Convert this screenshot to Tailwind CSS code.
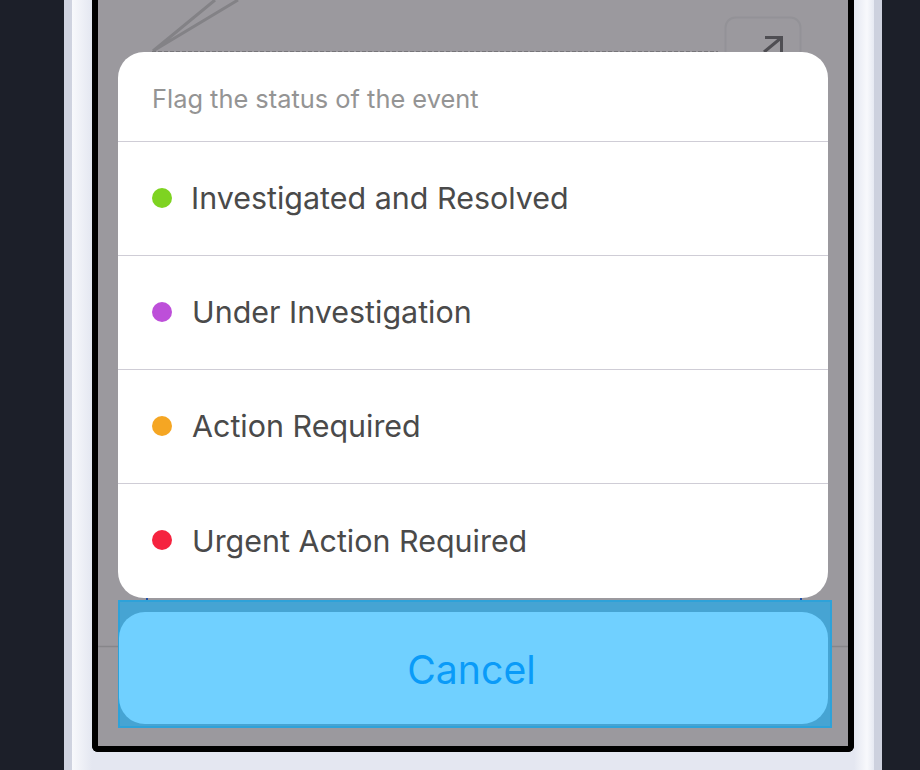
<!DOCTYPE html>
<html lang="en">
<head>
    <meta charset="UTF-8">
    <title>Flag status</title>
    <script src="https://cdn.jsdelivr.net/npm/@tailwindcss/browser@4"></script>
</head>
<body class="bg-[#1c1f29] font-['Inter',sans-serif]">
    <div class="w-[920px] h-[770px] overflow-hidden">
        <!-- phone body -->
        <div class="ml-[64px] w-[818px] h-[770px] border-l-8 border-r-8 border-l-[#cfd3e0] border-r-[#cdd1de] bg-[linear-gradient(to_right,#f8f9fc_0px,#e4e7f1_20px,#e4e7f1_782px,#f8f9fc_795px,#e6e9f2_802px)] pl-[20px]">
            <div class="w-[762px] h-[752px] border-x-6 border-b-6 border-black rounded-b-[6px] bg-[#9b999e] relative overflow-hidden">
                <!-- page behind the sheet -->
                <svg class="absolute left-0 top-0" width="750" height="746" viewBox="0 0 750 746" fill="none">
                    <path d="M55 51L117 0M55 51L140 0" stroke="#838286" stroke-width="3"/>
                    <path d="M54 51.5H620" stroke="#77767a" stroke-width="1" stroke-dasharray="4 2"/>
                    <rect x="627.5" y="17.5" width="75" height="60" rx="10" stroke="#939297" stroke-width="2"/>
                    <path d="M666 52L683 38M667 37.5H683.5V52" stroke="#4f4e53" stroke-width="3"/>
                    <path d="M0 646.5H750" stroke="#87868a" stroke-width="1.5"/>
                    <path d="M49 598V600M703 598V600" stroke="#1f4fa8" stroke-width="2"/>
                </svg>
                <div class="absolute inset-0 pl-[20px] pt-[52px] flex flex-col items-start">
                    <!-- action sheet -->
                    <div class="w-[710px] h-[546px] bg-white rounded-[26px] flex flex-col overflow-hidden">
                        <div class="h-[90px] shrink-0 flex items-center px-[34px] pt-[6px] border-b border-[#cfcdd6] text-[25.4px] text-[#949494]">Flag the status of the event</div>
                        <div class="h-[114px] shrink-0 flex items-center gap-[20px] px-[34px] pb-[2px] border-b border-[#cfcdd6] text-[30.45px] text-[#4a4a4a]">
                            <span class="w-5 h-5 rounded-full bg-[#7ed321]"></span>
                            <span class="mt-[3px] -ml-[1px]">Investigated and Resolved</span>
                        </div>
                        <div class="h-[114px] shrink-0 flex items-center gap-[20px] px-[34px] pb-[2px] border-b border-[#cfcdd6] text-[30.45px] text-[#4a4a4a]">
                            <span class="w-5 h-5 rounded-full bg-[#bd4fd9]"></span>
                            <span class="mt-[3px]">Under Investigation</span>
                        </div>
                        <div class="h-[114px] shrink-0 flex items-center gap-[20px] px-[34px] pb-[2px] border-b border-[#cfcdd6] text-[30.45px] text-[#4a4a4a]">
                            <span class="w-5 h-5 rounded-full bg-[#f5a623]"></span>
                            <span class="mt-[3px]">Action Required</span>
                        </div>
                        <div class="h-[114px] shrink-0 flex items-center gap-[20px] px-[34px] pb-[2px] text-[30.45px] text-[#4a4a4a]">
                            <span class="w-5 h-5 rounded-full bg-[#f5233f]"></span>
                            <span class="mt-[3px]">Urgent Action Required</span>
                        </div>
                    </div>
                    <!-- highlighted cancel button -->
                    <div class="mt-[2px] w-[714px] h-[128px] border-2 border-[#2ea2d9] bg-[#46a4d3] pt-[10px]">
                        <button class="block -ml-[1px] w-[709px] h-[112px] pt-[5px] pr-[4px] rounded-[26px] bg-[#70d0ff] text-[#0a9bf8] text-[39.2px]">Cancel</button>
                    </div>
                </div>
            </div>
        </div>
    </div>
</body>
</html>
